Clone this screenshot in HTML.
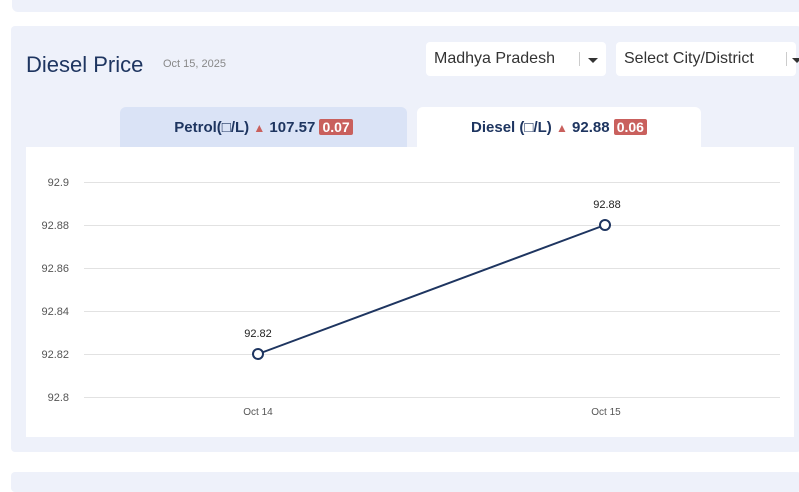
<!DOCTYPE html>
<html><head><meta charset="utf-8"><style>
body{margin:0;width:799px;height:479px;background:#fff;font-family:"Liberation Sans",sans-serif;position:relative;overflow:hidden}
.a{position:absolute}
.top{left:12px;top:-10px;width:800px;height:22px;background:#eef1fa;border-radius:6px}
.main{left:11px;top:26px;width:790px;height:426px;background:#eef1fa;border-radius:4px}
.bot{left:11px;top:472px;width:790px;height:20px;background:#eef1fa;border-radius:4px}
.sel{background:#fff;border-radius:4px;height:34px;top:42px;font-size:16px;color:#333;line-height:34px}
.tab{top:107px;height:40px;border-radius:6px 6px 0 0;font-weight:bold;font-size:15px;color:#1e3560;line-height:40px;text-align:center}
.badge{background:#c9605d;color:#fff;padding:0 3px;border-radius:2px;font-size:14px}
.tri{color:#c9605d;font-size:12px}
.arr{position:absolute;top:16px;width:0;height:0;border-left:5px solid transparent;border-right:5px solid transparent;border-top:5px solid #333}
</style></head><body>
<div class="a top"></div>
<div class="a main"></div>
<div class="a bot"></div>
<div class="a" style="left:26px;top:52px;font-size:22px;color:#1e3560">Diesel Price</div>
<div class="a" style="left:163px;top:58px;font-size:11px;color:#888">Oct 15, 2025</div>
<div class="a sel" style="left:426px;width:180px"><span style="margin-left:8px">Madhya Pradesh</span><span class="a" style="left:153px;top:10px;width:1px;height:14px;background:#ccc"></span><span class="arr" style="left:162px"></span></div>
<div class="a sel" style="left:616px;width:180px"><span style="margin-left:8px">Select City/District</span><span class="a" style="left:170px;top:10px;width:1px;height:14px;background:#ccc"></span><span class="arr" style="left:176px"></span></div>
<div class="a tab" style="left:120px;width:287px;background:#dae3f6">Petrol(&#9633;/L) <span class="tri">&#9650;</span> 107.57 <span class="badge">0.07</span></div>
<div class="a tab" style="left:417px;width:284px;background:#fff">Diesel (&#9633;/L) <span class="tri">&#9650;</span> 92.88 <span class="badge">0.06</span></div>
<div class="a" style="left:26px;top:147px;width:768px;height:290px;background:#fff"></div>
<svg class="a" style="left:0;top:0" width="799" height="479" font-family="Liberation Sans,sans-serif" font-size="11">
<g stroke="#e2e2e2" stroke-width="1">
<line x1="84" y1="182.5" x2="780" y2="182.5"/><line x1="84" y1="225.5" x2="780" y2="225.5"/><line x1="84" y1="268.5" x2="780" y2="268.5"/><line x1="84" y1="311.5" x2="780" y2="311.5"/><line x1="84" y1="354.5" x2="780" y2="354.5"/><line x1="84" y1="397.5" x2="780" y2="397.5"/></g>
<g fill="#555" text-anchor="end"><text x="69" y="186">92.9</text><text x="69" y="229">92.88</text><text x="69" y="272">92.86</text><text x="69" y="315">92.84</text><text x="69" y="358">92.82</text><text x="69" y="401">92.8</text></g>
<g fill="#555" text-anchor="middle" font-size="10"><text x="258" y="415">Oct 14</text><text x="606" y="415">Oct 15</text></g>
<line x1="258" y1="354" x2="605" y2="225" stroke="#1e3560" stroke-width="2"/>
<circle cx="258" cy="354" r="5" fill="#fff" stroke="#1e3560" stroke-width="2"/>
<circle cx="605" cy="225" r="5" fill="#fff" stroke="#1e3560" stroke-width="2"/>
<g fill="#222" text-anchor="middle"><text x="258" y="337">92.82</text><text x="607" y="208">92.88</text></g>
</svg>
</body></html>
